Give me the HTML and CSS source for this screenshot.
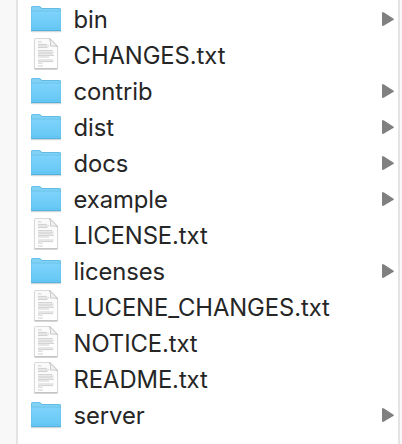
FILE: index.html
```
<!DOCTYPE html>
<html lang="en">
<head>
<meta charset="utf-8">
<title>Files</title>
<link rel="stylesheet" href="styles.css">
</head>
<body>
<svg class="defs" aria-hidden="true">
  <defs>
    <linearGradient id="front" x1="0" y1="0" x2="0" y2="1"><stop offset="0" stop-color="#7dd3fb"/><stop offset="1" stop-color="#66c7f6"/></linearGradient>
    <linearGradient id="sheet" x1="0" y1="0" x2="0" y2="1"><stop offset="0" stop-color="#fafafa"/><stop offset="1" stop-color="#fff"/></linearGradient>
    <symbol id="folder" viewBox="0 0 34 34">
      <path d="M2 28.5h30v1.8H2z" fill="#000" opacity=".13"/>
      <path d="M2 5.5Q2 4 3.5 4H10q1 0 1.7.8L13 6h17.5Q32 6 32 7.500V28q0 1-1 1H3q-1 0-1-1z" fill="#5fbbe6"/>
      <path d="M2.6 5.800q0-1 1-1H10q.7 0 1.300.6L12.700 7h17.700q1 0 1 1v3H2.600z" fill="#82d2f5"/>
      <path d="M2.400 9.500h29.200v18.700H2.400z" fill="url(#front)"/>
      <path d="M2 9h30" stroke="#64bfe9" stroke-width=".8"/>
      <path d="M2 26.300h30" stroke="#58b9e8" stroke-width=".4"/>
      <path d="M2 28.600h30" stroke="#4ca8d3" stroke-width=".8"/>
    </symbol>
    <symbol id="page" viewBox="0 0 34 34">
      <path d="M4.800 1h16.400l8 8v22.500H4.800z" fill="#000" opacity=".06"/>
      <path d="M6.500.500h14.700l7.300 7.500v21.800q0 1-1 1h-21q-1 0-1-1V1.500q0-1 1-1z" fill="url(#sheet)" stroke="#cfcfcf" stroke-width=".8"/>
      <path d="M5.500 30.900h23" stroke="#aaa" stroke-width=".9"/>
      <path d="M20.500.700q1.500 3.800 1 7.300 3.500-.500 7 .600z" fill="#f4f4f4" stroke="#bdbdbd" stroke-width=".8"/>
      <g stroke="#c0c0c0" stroke-width=".75" fill="none">
        <path d="M9 3.900h3.500M9 6.400h9M9 8h11M9 9.600h9.500M9 12.600h14.500M9 14.200h15.500M9 15.800h15M9 17.400h16M9 19h11M9 22h15.500M9 23.600h15M9 25.200h4.500M9 28h5"/>
      </g>
    </symbol>
    <symbol id="arrow" viewBox="0 0 12 14"><path d="M.7 0Q0 0 0 1v12q0 1 1 .9l1-.4 9.3-5.500q1.200-.8 0-1.600L2 .5Q1.300 0 .7 0z" fill="#808080"/></symbol>
  </defs>
</svg>
<main class="browser">
  <ul class="column">
    <li class="row"><svg class="icon"><use href="#folder"/></svg><span class="name">bin</span><svg class="arrow"><use href="#arrow"/></svg></li>
    <li class="row"><svg class="icon"><use href="#page"/></svg><span class="name">CHANGES.txt</span></li>
    <li class="row"><svg class="icon"><use href="#folder"/></svg><span class="name">contrib</span><svg class="arrow"><use href="#arrow"/></svg></li>
    <li class="row"><svg class="icon"><use href="#folder"/></svg><span class="name">dist</span><svg class="arrow"><use href="#arrow"/></svg></li>
    <li class="row"><svg class="icon"><use href="#folder"/></svg><span class="name">docs</span><svg class="arrow"><use href="#arrow"/></svg></li>
    <li class="row"><svg class="icon"><use href="#folder"/></svg><span class="name">example</span><svg class="arrow"><use href="#arrow"/></svg></li>
    <li class="row"><svg class="icon"><use href="#page"/></svg><span class="name">LICENSE.txt</span></li>
    <li class="row"><svg class="icon"><use href="#folder"/></svg><span class="name">licenses</span><svg class="arrow"><use href="#arrow"/></svg></li>
    <li class="row"><svg class="icon"><use href="#page"/></svg><span class="name">LUCENE_CHANGES.txt</span></li>
    <li class="row"><svg class="icon"><use href="#page"/></svg><span class="name">NOTICE.txt</span></li>
    <li class="row"><svg class="icon"><use href="#page"/></svg><span class="name">README.txt</span></li>
    <li class="row"><svg class="icon"><use href="#folder"/></svg><span class="name">server</span><svg class="arrow"><use href="#arrow"/></svg></li>
  </ul>
</main>
</body>
</html>
```
FILE: styles.css
```
* { box-sizing: border-box; }
body { margin: 0; background: #f8f8f8; overflow: hidden; }
.defs { display: block; width: 0; height: 0; }
.browser { height: 444px; padding: 0 2px 0 16px; }
.column {
  height: 444px;
  margin: 0;
  padding: 1px 4px 0 11px;
  list-style: none;
  background: #fff;
  border: solid #e4e4e4;
  border-width: 0 2px;
}
.row { display: flex; align-items: center; height: 36px; }
.icon { width: 34px; height: 34px; flex: none; }
.name {
  flex: 1;
  margin-left: 10.6px;
  padding-top: 1px;
  font: 440 23.8px/34px Inter, sans-serif;
  letter-spacing: -0.08px;
  color: #262626;
  white-space: nowrap;
}
.arrow { width: 12px; height: 14px; flex: none; }
```
